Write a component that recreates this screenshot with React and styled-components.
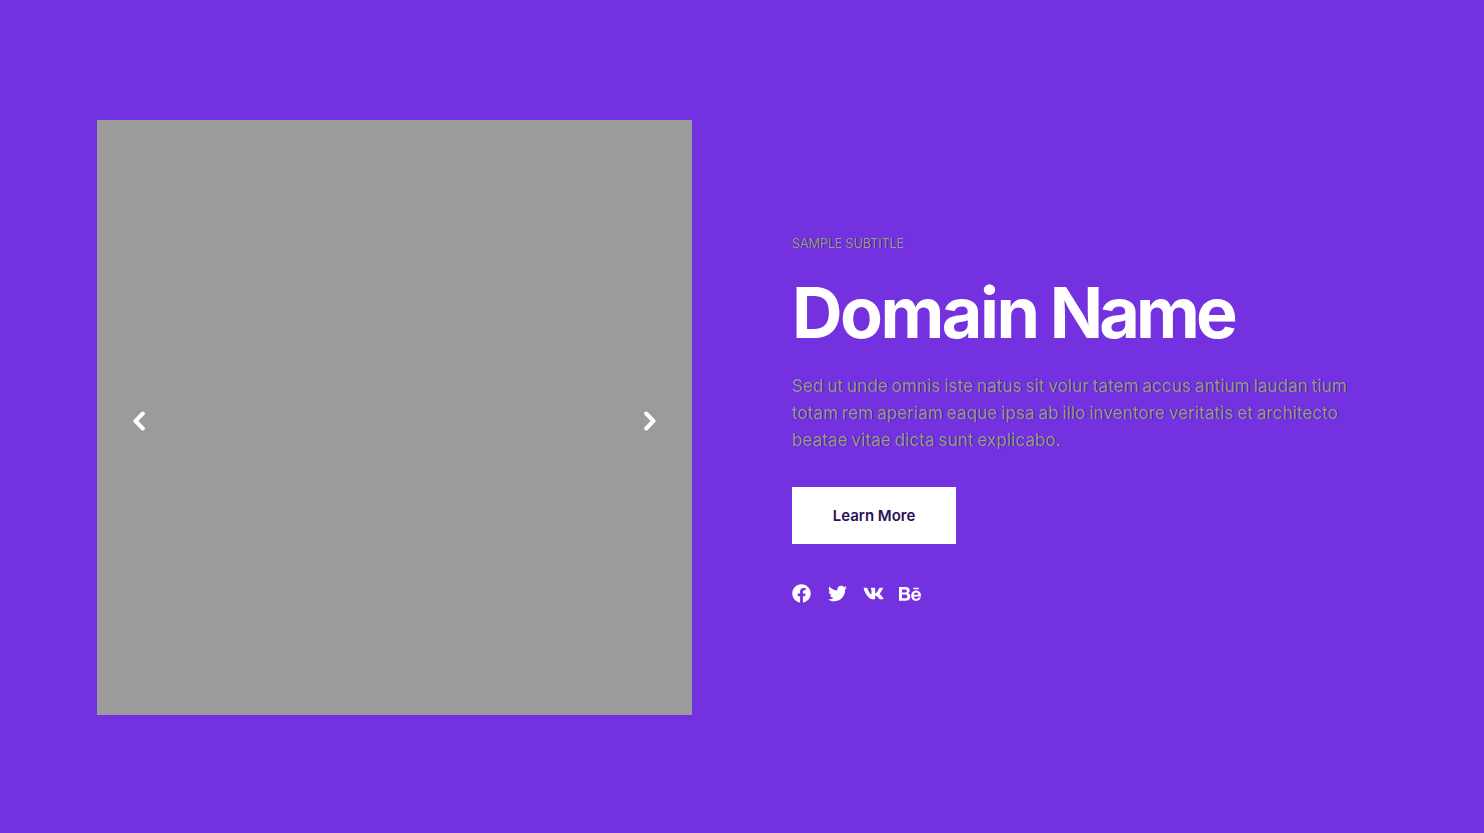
import React from 'react';
import styled, { createGlobalStyle } from 'styled-components';
import { FaBehance, FaFacebook, FaTwitter, FaVk } from 'react-icons/fa';


const lines = [
   'Sed ut unde omnis iste natus sit volur tatem accus antium laudan tium',
   'totam rem aperiam eaque ipsa ab illo inventore veritatis et architecto',
   'beatae vitae dicta sunt explicabo.',
];

const Chevron = ({ flip }) => (
   <svg width="12" height="20" viewBox="0 0 12 20" fill="none">
      <path
         d={flip ? 'M2.2 2.5L9.5 10L2.2 17.5' : 'M9.8 2.5L2.5 10L9.8 17.5'}
         stroke="#fff"
         strokeWidth="4"
         strokeLinecap="round"
         strokeLinejoin="round"
      />
   </svg>
);

const App = () => {
   return (
      <>
         <GlobalStyle />
         <StyledSection>
            <StyledSlider>
               <StyledArrow aria-label="Previous"><Chevron /></StyledArrow>
               <StyledArrow aria-label="Next"><Chevron flip /></StyledArrow>
            </StyledSlider>
            <StyledContent>
               <StyledSubtitle>SAMPLE SUBTITLE</StyledSubtitle>
               <StyledTitle>Domain <StyledTight>Name</StyledTight></StyledTitle>
               <StyledText>
                  {lines.map((line) => (
                     <StyledLine key={line}>{line}</StyledLine>
                  ))}
               </StyledText>
               <StyledButton>Learn More</StyledButton>
               <StyledSocials>
                  <StyledSocial href="#" aria-label="Facebook"><FaFacebook size={19} /></StyledSocial>
                  <StyledSocial href="#" aria-label="Twitter"><FaTwitter size={19} /></StyledSocial>
                  <StyledSocial href="#" aria-label="VK"><FaVk size={21} /></StyledSocial>
                  <StyledSocial href="#" aria-label="Behance"><FaBehance size={22} /></StyledSocial>
               </StyledSocials>
            </StyledContent>
         </StyledSection>
      </>
   )
}

const GlobalStyle = createGlobalStyle`
   * {
      box-sizing: border-box;
   }

   body {
      margin: 0;
      background: #7431e0;
      font-family: Inter, "Liberation Sans", sans-serif;
   }
`;

const StyledSection = styled.section`
   display: grid;
   grid-template-columns: 595px 1fr;
   column-gap: 100px;
   min-height: 833px;
   padding: 120px 97px 118px;
`;

const StyledSlider = styled.div`
   display: flex;
   align-items: center;
   justify-content: space-between;
   height: 595px;
   padding: 7px 36px 0;
   background: #9b9b9c;
`;

const StyledArrow = styled.button`
   display: flex;
   padding: 0;
   border: 0;
   background: none;
`;

const StyledContent = styled.div`
   padding-top: 113px;
`;

const StyledSubtitle = styled.p`
   margin: 0;
   font-size: 13px;
   line-height: 20px;
   letter-spacing: -0.37px;
   color: #999;
   text-shadow: 1px 0 0 rgba(0, 0, 0, 0.5);
`;

const StyledTitle = styled.h1`
   margin: 20px 0 0;
   font-size: 70px;
   font-weight: 700;
   line-height: 80px;
   letter-spacing: -2.5px;
   word-spacing: -2px;
   white-space: nowrap;
   color: #fff;
`;

const StyledTight = styled.span`
   letter-spacing: -3.8px;
`;

const StyledText = styled.p`
   margin: 20px 0 0;
   font-size: 17px;
   line-height: 27px;
   letter-spacing: 0.1px;
   word-spacing: -1px;
   color: #999;
   text-shadow: 1px 0 0 rgba(0, 0, 0, 0.5);
`;

const StyledLine = styled.span`
   display: block;
   white-space: nowrap;
`;

const StyledButton = styled.button`
   display: block;
   width: 164px;
   height: 57px;
   margin-top: 33px;
   padding: 0;
   border: 0;
   background: #fff;
   color: #2b1157;
   font-family: inherit;
   font-size: 15px;
   font-weight: 600;
`;

const StyledSocials = styled.div`
   display: flex;
   align-items: center;
   height: 21px;
   margin-top: 39px;
`;

const StyledSocial = styled.a`
   display: flex;
   color: #fff;

   & + & {
      margin-left: 17px;
   }

   &:nth-child(3) {
      margin-left: 16px;
   }

   &:last-child {
      margin-left: 15px;
   }
`;

export default App;
